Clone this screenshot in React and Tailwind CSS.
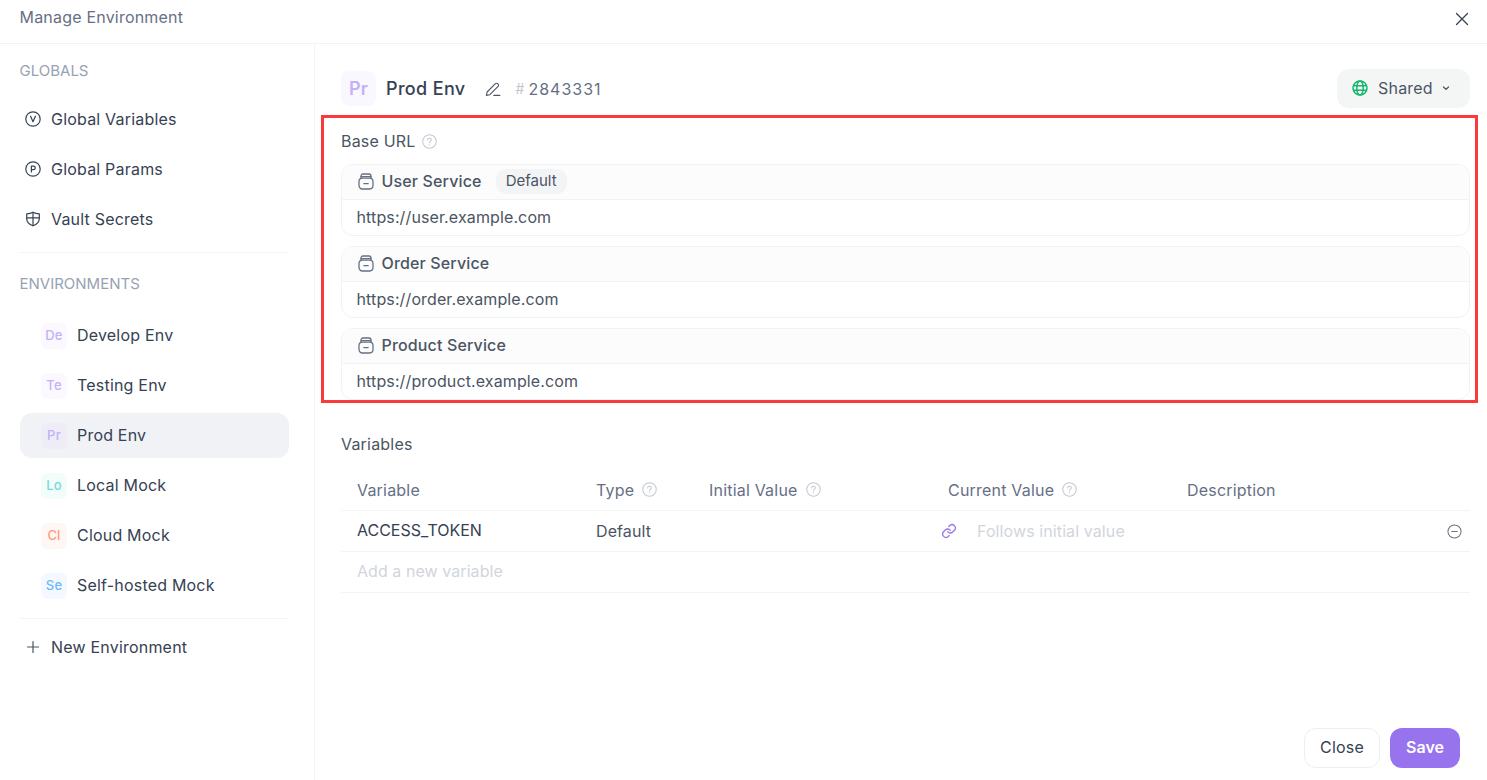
import React from "react";

const Help = ({ className = "" }) => (
  <svg width="15" height="15" viewBox="0 0 16 16" fill="none" className={className}>
    <circle cx="8" cy="8" r="7.200" stroke="#c4c8d0" strokeWidth="1.100" />
    <path d="M6 6.300c0-1.100.9-1.800 2-1.800s2 .7 2 1.700c0 1.400-2 1.500-2 3" stroke="#c4c8d0" strokeWidth="1.100" strokeLinecap="round" />
    <circle cx="8" cy="11.500" r=".7" fill="#c4c8d0" />
  </svg>
);

const Jar = () => (
  <svg width="16" height="17" viewBox="0 0 16 17" fill="none" stroke="#667085" strokeWidth="1.300" strokeLinecap="round" strokeLinejoin="round">
    <path d="M3 5.200V3.400C3 2 3.800 1 5 1h6c1.200 0 2 1 2 2.400v1.800" />
    <path d="M3 3.600h10" />
    <rect x="1" y="5.200" width="14" height="10.800" rx="3.400" />
    <path d="M5.800 10.600h4.400" />
  </svg>
);

const LetterCircle = ({ l }) => (
  <svg width="16" height="16" viewBox="0 0 16 16" fill="none" stroke="#364153" strokeWidth="1.200" strokeLinecap="round" strokeLinejoin="round">
    <circle cx="8" cy="8" r="7.200" />
    {l === "V" ? <path d="M5.600 5.200 8 10.800l2.400-5.600" /> : <path d="M6.400 11V5.200h2.100a1.700 1.700 0 0 1 0 3.500H6.400" />}
  </svg>
);

const Shield = () => (
  <svg width="16" height="16" viewBox="0 0 16 16" fill="none" stroke="#364153" strokeWidth="1.200" strokeLinecap="round" strokeLinejoin="round">
    <path d="M8 1.300C10 2.400 12 2.800 14.300 2.900v4.500c0 3.600-2.600 6-6.300 7.300-3.700-1.300-6.300-3.700-6.300-7.300V2.900C4 2.800 6 2.400 8 1.300z" />
    <path d="M8 1.300v13.400M1.700 6.800h12.600" />
  </svg>
);

const Globe = () => (
  <svg width="16" height="16" viewBox="0 0 16 16" fill="none" stroke="#16b46c" strokeWidth="1.500">
    <circle cx="8" cy="8" r="7" />
    <ellipse cx="8" cy="8" rx="3.200" ry="7" />
    <path d="M1.400 5.700h13.200M1.400 10.300h13.200" />
  </svg>
);

const NavLabel = ({ children, className = "" }) => (
  <span className={`text-base leading-6 text-[#364153] ${className}`}>{children}</span>
);

const GlobalItem = ({ icon, label }) => (
  <div className="flex h-[45px] items-center gap-[10px] rounded-xl pl-[5px]">
    <span className="flex w-4 justify-center">{icon}</span>
    <NavLabel>{label}</NavLabel>
  </div>
);

const EnvItem = ({ abbr, label, text, bg, active }) => (
  <div className={`flex h-[45px] items-center gap-[10px] rounded-xl pl-[21px] ${active ? "bg-[#f1f2f6]" : ""}`}>
    <span className={`flex h-[26px] w-[26px] items-center justify-center rounded-md text-[13px] font-medium ${text} ${bg}`}>{abbr}</span>
    <NavLabel className="pb-[2px]">{label}</NavLabel>
  </div>
);

const ServiceCard = ({ name, url, isDefault }) => (
  <div className="h-[72px] overflow-hidden rounded-xl border border-[#f1f2f4]">
    <div className="flex h-[35px] items-center gap-2 border-b border-[#f1f2f4] bg-[#fcfcfd] pb-[2px] pl-[15.500px]">
      <Jar />
      <span className="text-base font-[450] leading-6 tracking-[0.15px] text-[#4b5563]">{name}</span>
      {isDefault && (
        <span className="ml-[6px] flex h-[25px] items-center rounded-[10px] bg-[#f3f4f6] px-[10px] pt-px text-[15px] tracking-normal text-[#4b5563]">Default</span>
      )}
    </div>
    <div className="flex h-[35px] items-center pb-[2px] pl-[14.500px] text-base tracking-[0.12px] text-[#4b5563]">{url}</div>
  </div>
);

const Th = ({ children, help, className }) => (
  <div className={`flex items-center gap-2 px-4 ${className}`}>
    <span className="text-base text-[#667085]">{children}</span>
    {help && <Help />}
  </div>
);

export default function App() {
  return (
    <div className="relative flex h-[780px] flex-col overflow-hidden bg-white font-['Inter',sans-serif] tracking-[0.2px]">
      <header className="flex h-[44px] shrink-0 items-center justify-between border-b border-[#f1f2f4] pb-[10px] pl-[19.500px] pr-[18px]">
        <h1 className="text-base font-normal text-[#667085]">Manage Environment</h1>
        <svg className="mt-[4px]" width="14" height="14" viewBox="0 0 14 14" fill="none" stroke="#364153" strokeWidth="1.300" strokeLinecap="round">
          <path d="M1.500 1.500l11 11M12.500 1.500l-11 11" />
        </svg>
      </header>

      <div className="flex min-h-0 flex-1">
        <aside className="w-[315px] shrink-0 border-r border-[#f3f4f6] pl-5 pr-[25px] pt-4">
          <div className="-ml-[0.500px] text-[15px] leading-[22px] tracking-normal text-[#98a2b3]">GLOBALS</div>
          <div className="mt-[14px] flex flex-col gap-[5px]">
            <GlobalItem icon={<LetterCircle l="V" />} label="Global Variables" />
            <GlobalItem icon={<LetterCircle l="P" />} label="Global Params" />
            <GlobalItem icon={<Shield />} label="Vault Secrets" />
          </div>
          <div className="mt-[11px] h-px bg-[#f3f4f6]" />
          <div className="-ml-[0.500px] mt-5 text-[15px] leading-[22px] tracking-normal text-[#98a2b3]">ENVIRONMENTS</div>
          <div className="mt-[18px] flex flex-col gap-[5px]">
            <EnvItem abbr="De" label="Develop Env" text="text-[#c4b0fa]" bg="bg-[#fbf9ff]" />
            <EnvItem abbr="Te" label="Testing Env" text="text-[#c4b0fa]" bg="bg-[#fbf9ff]" />
            <EnvItem abbr="Pr" label="Prod Env" text="text-[#c4b0fa]" bg="bg-[#eeedf7]" active />
            <EnvItem abbr="Lo" label="Local Mock" text="text-[#74dcd8]" bg="bg-[#f1fcfb]" />
            <EnvItem abbr="Cl" label="Cloud Mock" text="text-[#fd9a7c]" bg="bg-[#fff7f4]" />
            <EnvItem abbr="Se" label="Self-hosted Mock" text="text-[#6cb8fc]" bg="bg-[#f4f9ff]" />
          </div>
          <div className="mt-[10px] h-px bg-[#f3f4f6]" />
          <div className="mt-[5px] flex h-[45px] items-center gap-[10px] pl-[5px]">
            <svg width="16" height="16" viewBox="0 0 16 16" fill="none" stroke="#4b5563" strokeWidth="1.200" strokeLinecap="round">
              <path d="M8 2.500v11M2.500 8h11" />
            </svg>
            <NavLabel>New Environment</NavLabel>
          </div>
        </aside>

        <main className="relative min-w-0 flex-1 pl-[26px] pr-[17px]">
          <div className="mt-[27px] flex h-[35px] items-center justify-between">
            <div className="flex items-center">
              <span className="flex h-[35px] w-[35px] items-center justify-center rounded-lg bg-[#faf8ff] text-lg font-semibold text-[#c4b0fa]">Pr</span>
              <span className="ml-[10px] text-lg font-[450] tracking-[0.35px] text-[#364153]">Prod Env</span>
              <svg className="ml-[19px]" width="16" height="16" viewBox="0 0 16 16" fill="none" stroke="#4b5563" strokeWidth="1.100" strokeLinecap="round" strokeLinejoin="round">
                <path d="M1.400 14.400l.7-3.400 8.300-8.300a1.600 1.600 0 0 1 2.300 0l.4.4a1.600 1.600 0 0 1 0 2.300L4.800 13.700z" />
                <path d="M8.800 14.400h6" />
              </svg>
              <span className="ml-[15px] flex items-center gap-[4px] text-base tracking-[1px] text-[#667085]">
                <span className="text-sm tracking-normal text-[#c0c5cd]">#</span>2843331
              </span>
            </div>
            <div className="-mt-[1px] flex h-[39px] w-[133px] items-center rounded-xl bg-[#f4f6f6] pl-[15px]">
              <Globe />
              <span className="ml-[10px] text-base text-[#4b5563]">Shared</span>
              <svg className="ml-[7px]" width="12" height="12" viewBox="0 0 12 12" fill="none" stroke="#4b5563" strokeWidth="1.300" strokeLinecap="round" strokeLinejoin="round">
                <path d="M3.500 5l2.500 2.400L8.500 5" />
              </svg>
            </div>
          </div>

          <div className="mt-[23px] flex h-[24px] items-center gap-[6px]">
            <span className="text-base text-[#4b5563]">Base URL</span>
            <Help />
          </div>
          <div className="mt-[11px] flex flex-col gap-[10px]">
            <ServiceCard name="User Service" url="https://user.example.com" isDefault />
            <ServiceCard name="Order Service" url="https://order.example.com" />
            <ServiceCard name="Product Service" url="https://product.example.com" />
          </div>

          <div className="mt-[32px] text-base leading-6 text-[#4b5563]">Variables</div>

          <div className="mt-[14px]">
            <div className="grid h-[41px] grid-cols-[239px_113px_239px_239px_1fr] items-center border-b border-[#f3f4f6] pb-px">
              <Th>Variable</Th>
              <Th help>Type</Th>
              <Th help>Initial Value</Th>
              <Th help>Current Value</Th>
              <Th>Description</Th>
            </div>
            <div className="grid h-[41px] grid-cols-[239px_113px_239px_239px_1fr] items-center border-b border-[#f3f4f6]">
              <div className="px-4 pb-[2px] text-base tracking-normal text-[#364153]">ACCESS_TOKEN</div>
              <div className="px-4 text-base tracking-[0.1px] text-[#4b5563]">Default</div>
              <div />
              <div className="flex items-center gap-[20px] pl-[9px]">
                <svg width="16" height="16" viewBox="0 0 24 24" fill="none" stroke="#9b76ee" strokeWidth="2" strokeLinecap="round" strokeLinejoin="round">
                  <path d="M10 13a5 5 0 0 0 7.500.5l3-3a5 5 0 0 0-7-7l-1.700 1.700" />
                  <path d="M14 11a5 5 0 0 0-7.500-.5l-3 3a5 5 0 0 0 7 7l1.700-1.700" />
                </svg>
                <span className="text-base tracking-[0.1px] text-[#d1d5db]">Follows initial value</span>
              </div>
              <div className="flex justify-end pr-2">
                <svg width="15" height="15" viewBox="0 0 16 16" fill="none" stroke="#6b7280" strokeWidth="1.100" strokeLinecap="round">
                  <circle cx="8" cy="8" r="7" />
                  <path d="M5 8h6" />
                </svg>
              </div>
            </div>
            <div className="flex h-[41px] items-center border-b border-[#f3f4f6] px-4 pb-[2px] text-base tracking-[0.06px] text-[#d1d5db]">Add a new variable</div>
          </div>

          <div className="absolute bottom-3 right-[27px] flex gap-[10px]">
            <button className="h-10 w-[76px] rounded-xl border border-[#eceef0] bg-white pb-[2px] text-base text-[#364153]">Close</button>
            <button className="h-10 w-[70px] rounded-xl bg-[#9873ee] pb-[2px] text-base font-semibold tracking-normal text-white">Save</button>
          </div>
        </main>
      </div>

      <div className="pointer-events-none absolute left-[321px] top-[115px] h-[288px] w-[1157px] border-[3px] border-[#f83a3a]" />
    </div>
  );
}
